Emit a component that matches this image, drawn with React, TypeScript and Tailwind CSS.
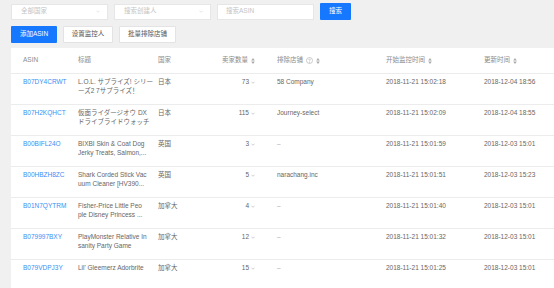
const rows = [
  { asin: 'B07DY4CRWT', title: ['L.O.L. サプライズ! シリー', 'ーズ2 7サプライズ！'], country: '日本', count: 73, shop: '58 Company', start: '2018-11-21 15:02:18', update: '2018-12-04 18:56' },
  { asin: 'B07H2KQHCT', title: ['仮面ライダージオウ DX', 'ドライブライドウォッチ'], country: '日本', count: 115, shop: 'Journey-select', start: '2018-11-21 15:02:09', update: '2018-12-04 18:55' },
  { asin: 'B00BIFL24O', title: ['BIXBI Skin & Coat Dog', 'Jerky Treats, Salmon,...'], country: '英国', count: 3, shop: '–', start: '2018-11-21 15:01:59', update: '2018-12-03 15:01' },
  { asin: 'B00HBZH8ZC', title: ['Shark Corded Stick Vac', 'uum Cleaner [HV390...'], country: '英国', count: 5, shop: 'narachang.inc', start: '2018-11-21 15:01:51', update: '2018-12-03 15:23' },
  { asin: 'B01N7QYTRM', title: ['Fisher-Price Little Peo', 'ple Disney Princess ...'], country: '加拿大', count: 4, shop: '–', start: '2018-11-21 15:01:40', update: '2018-12-03 15:01' },
  { asin: 'B079997BXY', title: ['PlayMonster Relative In', 'sanity Party Game'], country: '加拿大', count: 12, shop: '–', start: '2018-11-21 15:01:32', update: '2018-12-03 15:01' },
  { asin: 'B079VDPJ3Y', title: ["Lil' Gleemerz Adorbrite"], country: '加拿大', count: 15, shop: '–', start: '2018-11-21 15:01:25', update: '2018-12-03 15:01' }
];

const cols = 'grid grid-cols-[55px_80px_60px_59px_109px_98px_1fr] pl-[12px]';

const Chevron = ({ className }: { className?: string }) => (
  <svg viewBox="0 0 10 6" className={className} fill="none" stroke="currentColor" strokeWidth="1.2">
    <path d="M1 1l4 4 4-4" />
  </svg>
);

const Sorter = () => (
  <svg viewBox="0 0 6 10" className="w-[4px] h-[6px] ml-[3px] text-[#aaa]" fill="currentColor">
    <path d="M3 0l3 4H0z" />
    <path d="M3 10l3-4H0z" />
  </svg>
);

const Help = () => (
  <svg viewBox="0 0 12 12" className="w-[7px] h-[7px] ml-[3px] text-[#aaa]" fill="none" stroke="currentColor" strokeWidth="1">
    <circle cx="6" cy="6" r="5.2" />
    <path d="M4.6 4.8a1.4 1.4 0 1 1 1.9 1.3c-.4.2-.5.4-.5.9" />
    <circle cx="6" cy="8.8" r=".4" fill="currentColor" />
  </svg>
);

export default function App() {
  return (
    <div
      className="w-[554px] h-[288px] overflow-hidden bg-[#f0f0f0] text-[6.5px] leading-[8.5px] text-[#666]"
      style={{ fontFamily: '"Liberation Sans", "Noto Sans CJK SC", sans-serif' }}
    >
      <div className="flex items-center gap-[6px] pl-[11px] pt-[3px]">
        <div className="w-[97px] h-[16px] bg-white border border-[#e6e6e6] flex items-center justify-between pl-[9px] pr-[7px] text-[#c4c4c4]">
          全部国家
          <Chevron className="w-[4px] h-[3px] text-[#c8c8c8]" />
        </div>
        <div className="w-[97px] h-[16px] bg-white border border-[#e6e6e6] flex items-center justify-between pl-[9px] pr-[7px] text-[#c4c4c4]">
          搜索创建人
          <Chevron className="w-[4px] h-[3px] text-[#c8c8c8]" />
        </div>
        <div className="w-[97px] h-[16px] bg-white border border-[#e6e6e6] flex items-center pl-[8px] text-[#c4c4c4]">
          搜索ASIN
        </div>
        <button className="w-[31px] h-[17px] bg-[#1677ff] text-white rounded-[1px] flex items-center justify-center">
          搜索
        </button>
      </div>

      <div className="flex items-center gap-[6px] pl-[11px] mt-[6px]">
        <button className="w-[46px] h-[17px] bg-[#1677ff] text-white rounded-[1px] flex items-center justify-center">
          添加ASIN
        </button>
        <button className="w-[50px] h-[17px] bg-white border border-[#e3e3e3] text-[#555] rounded-[1px] flex items-center justify-center">
          设置监控人
        </button>
        <button className="w-[57px] h-[17px] bg-white border border-[#e3e3e3] text-[#555] rounded-[1px] flex items-center justify-center">
          批量排除店铺
        </button>
      </div>

      <div className="ml-[11px] mt-[5px] bg-white h-[240px]">
        <div className={`${cols} h-[26px] items-center border-b border-[#ececec] text-[#8c8c8c]`}>
          <div>ASIN</div>
          <div>标题</div>
          <div>国家</div>
          <div className="flex items-center justify-end pr-[22px]">
            卖家数量
            <Sorter />
          </div>
          <div className="flex items-center">
            排除店铺
            <Help />
            <Sorter />
          </div>
          <div className="flex items-center">
            开始监控时间
            <Sorter />
          </div>
          <div className="flex items-center">
            更新时间
            <Sorter />
          </div>
        </div>
        {rows.map((r) => (
          <div key={r.asin} className={`${cols} h-[31px] pt-[4px] border-b border-[#ececec]`}>
            <div className="text-[#3a8ef6]">{r.asin}</div>
            <div className="whitespace-nowrap">
              {r.title.map((t) => (
                <div key={t}>{t}</div>
              ))}
            </div>
            <div>{r.country}</div>
            <div className="flex items-start justify-end pr-[22px]">
              {r.count}
              <Chevron className="w-[4px] h-[3px] ml-[2px] mt-[3px] text-[#999]" />
            </div>
            <div className={r.shop === '–' ? 'text-[#aaa]' : ''}>{r.shop}</div>
            <div>{r.start}</div>
            <div>{r.update}</div>
          </div>
        ))}
      </div>
    </div>
  );
}
